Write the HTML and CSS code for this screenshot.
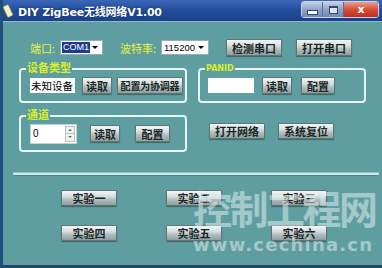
FILE: index.html
```html
<!DOCTYPE html>
<html>
<head>
<meta charset="utf-8">
<link rel="stylesheet" href="styles.css">
</head>
<body>
<div class="window">
  <div class="titlebar">
    <svg class="appicon" width="10" height="14" viewBox="0 0 10 14"><rect x="2" y="1" width="6" height="12" rx="1" transform="rotate(-25 5 7)" fill="#f4f0c8" stroke="#8a7a40" stroke-width="0.8"/></svg>
    <span class="title">DIY ZigBee无线网络V1.00</span>
    <div class="controls">
      <div class="ctl min"><span class="bar"></span></div>
      <div class="ctl max"><span class="box"></span></div>
      <div class="ctl close">x</div>
    </div>
  </div>
  <div class="content">
    <div class="row1">
      <span class="lbl l1">端口:</span>
      <div class="combo c1"><span class="sel">COM1</span><span class="arrow"></span></div>
      <span class="lbl l2">波特率:</span>
      <div class="combo c2"><span class="val">115200</span><span class="arrow"></span></div>
      <button class="btn b56 m17">检测串口</button>
      <button class="btn b56 m14">打开串口</button>
    </div>
    <div class="row2">
      <div class="group">
        <span class="legend">设备类型</span>
        <div class="ginner g1">
          <div class="tbox t1">未知设备</div>
          <button class="btn b30 ml7">读取</button>
          <button class="btn b66 ml5 narrow">配置为协调器</button>
        </div>
      </div>
      <div class="group">
        <span class="legend small">PANID</span>
        <div class="ginner g2">
          <div class="tbox t2"></div>
          <button class="btn b30 ml8">读取</button>
          <button class="btn b34 ml9">配置</button>
        </div>
      </div>
    </div>
    <div class="row3">
      <div class="group tall">
        <span class="legend">通道</span>
        <div class="ginner g3">
          <div class="spin"><span class="sv">0</span><span class="spbtns"><span class="up"></span><span class="dn"></span></span></div>
          <button class="btn b30 ml13">读取</button>
          <button class="btn b35 ml15">配置</button>
        </div>
      </div>
      <div class="rbtns">
        <button class="btn b56">打开网络</button>
        <button class="btn b56 ml13">系统复位</button>
      </div>
    </div>
    <div class="sep"></div>
    <div class="grid">
      <button class="btn">实验一</button>
      <button class="btn">实验二</button>
      <button class="btn">实验三</button>
      <button class="btn">实验四</button>
      <button class="btn">实验五</button>
      <button class="btn">实验六</button>
    </div>
  </div>
  <div class="wm">
    <div class="wm1">控制工程网</div>
    <div class="wm2">www.cechina.cn</div>
  </div>
</div>
</body>
</html>
```
FILE: styles.css
```css
html, body { margin: 0; padding: 0; }
body { width: 382px; height: 268px; overflow: hidden; font-family: "Noto Sans CJK SC", "Liberation Sans", sans-serif; font-size: 12px; }
.window { width: 382px; height: 268px; background: #5f9ea0; border-left: 3px solid #1e4f78; border-bottom: 3px solid #1e4a6e; box-sizing: border-box; position: relative; overflow: hidden; }
.titlebar { height: 21px; margin-left: -3px; background: linear-gradient(to bottom, #3c67b8 0%, #234f9e 45%, #1b418a 100%); border-bottom: 1px solid #8fb8c8; display: flex; align-items: center; position: relative; }
.appicon { margin-left: 3px; margin-right: 5px; }
.title { color: #fff; font-family: "DejaVu Sans", "Noto Sans CJK SC", sans-serif; font-weight: bold; font-size: 11px; letter-spacing: -0.2px; text-shadow: 0 0 2px #0a2050; white-space: nowrap; }
.controls { margin-left: auto; margin-right: 3px; display: flex; align-self: flex-start; margin-top: 1px; border: 1px solid #c8d4ec; border-radius: 3px; overflow: hidden; height: 15px; }
.ctl { height: 15px; display: flex; align-items: center; justify-content: center; }
.min, .max { width: 20px; background: linear-gradient(to bottom, #c4d0e6, #8fa2c6 50%, #7488b4); border-right: 1px solid #5a6e98; }
.min .bar { width: 9px; height: 3px; background: #fff; border: 1px solid #34486e; margin-top: 5px; }
.max .box { width: 7px; height: 5px; border: 1px solid #34486e; border-top-width: 2px; background: #dce4f2; }
.close { width: 34px; background: linear-gradient(to bottom, #e8a090, #d64c38 50%, #c03020); color: #fff; font-weight: bold; font-size: 11px; font-family: "DejaVu Sans", sans-serif; }
.content { padding-left: 16px; }
.row1 { display: flex; align-items: center; margin-top: 17px; height: 17px; padding-left: 11px; }
.lbl { color: #e4f23c; font-size: 11px; white-space: nowrap; }
.l1 { width: 30px; }
.l2 { width: 41px; margin-left: 17px; }
.combo { height: 15px; background: #fff; border: 1px solid #9ab; box-sizing: border-box; display: flex; align-items: center; position: relative; white-space: nowrap; overflow: hidden; }
.c1 { width: 43px; }
.c2 { width: 48px; }
.sel { background: #1c3e8a; color: #fff; font-family: "Liberation Sans", sans-serif; font-size: 9px; line-height: 11px; margin-left: 1px; padding: 0 1px; }
.val { font-family: "Liberation Sans", sans-serif; font-size: 9.5px; margin-left: 2px; color: #000; }
.arrow { position: absolute; right: 4px; top: 5px; width: 0; height: 0; border-left: 3px solid transparent; border-right: 3px solid transparent; border-top: 3px solid #000; }
.btn { height: 17px; padding: 0; margin: 0; box-sizing: border-box; border: 1px solid #5e7476; border-radius: 1px; background: linear-gradient(to bottom, #f2f6f6 0%, #d4dcdc 40%, #b4c0c0 60%, #8e9e9e 100%); color: #1a2626; font-family: "Noto Sans CJK SC", sans-serif; font-weight: bold; font-size: 11px; line-height: 14px; box-shadow: 0 1px 1px #3e6466; white-space: nowrap; overflow: hidden; }
.btn.narrow { font-size: 10px; letter-spacing: -0.2px; }
.b56 { width: 56px; }
.b30 { width: 30px; }
.b34 { width: 34px; }
.b35 { width: 35px; }
.b66 { width: 66px; }
.m17 { margin-left: 17px; }
.m14 { margin-left: 14px; }
.ml5 { margin-left: 5px; }
.ml7 { margin-left: 7px; }
.ml8 { margin-left: 8px; }
.ml9 { margin-left: 9px; }
.ml13 { margin-left: 13px; }
.ml15 { margin-left: 15px; }
.row2 { display: flex; margin-top: 12px; gap: 11px; }
.group { width: 168px; height: 35px; border: 2px solid #e6f4f4; border-radius: 4px; box-sizing: border-box; position: relative; }
.group.tall { height: 37px; }
.legend { position: absolute; left: 5px; top: -9px; color: #d8f028; font-size: 11px; font-weight: bold; line-height: 13px; background: #5f9ea0; padding: 0 1px; white-space: nowrap; }
.legend.small { font-size: 8px; font-family: "DejaVu Sans", sans-serif; top: -6px; line-height: 9px; }
.ginner { display: flex; align-items: center; height: 100%; }
.g1 { padding-left: 9px; }
.g2 { padding-left: 8px; }
.g3 { padding-left: 9px; }
.tbox { height: 15px; background: #fff; box-sizing: border-box; font-size: 10.5px; line-height: 15px; color: #000; padding-left: 1px; white-space: nowrap; overflow: hidden; }
.t1 { width: 45px; }
.t2 { width: 46px; }
.spin { width: 47px; height: 20px; background: #fff; display: flex; align-items: center; box-sizing: border-box; border: 1px solid #c6d2d2; }
.sv { flex: 1; font-family: "Liberation Sans", sans-serif; font-size: 10px; padding-left: 2px; }
.spbtns { width: 10px; height: 16px; display: flex; flex-direction: column; margin-right: 1px; border: 1px solid #b8c4c4; box-sizing: border-box; }
.spbtns span { flex: 1; position: relative; background: #eef2f2; }
.up { border-bottom: 1px solid #b8c4c4; }
.up::after { content: ""; position: absolute; left: 2px; top: 2px; border-left: 2px solid transparent; border-right: 2px solid transparent; border-bottom: 2px solid #607070; }
.dn::after { content: ""; position: absolute; left: 2px; top: 2px; border-left: 2px solid transparent; border-right: 2px solid transparent; border-top: 2px solid #607070; }
.row3 { display: flex; margin-top: 12px; align-items: flex-start; }
.rbtns { display: flex; margin-left: 22px; margin-top: 8px; }
.rbtns .btn { height: 16px; }
.sep { height: 2px; margin: 20px 3px 0 -6px; background: #cfe8ea; border-top: 1px solid #8cc4c8; border-radius: 1px; box-shadow: 0 1px 0 #4a8486; }
.grid { display: grid; grid-template-columns: 56px 56px 56px; column-gap: 49px; row-gap: 19px; margin-top: 15px; padding-left: 42px; }
.grid .btn { width: 56px; height: 16px; }
.wm { position: absolute; left: 190px; top: 182px; color: rgba(232, 244, 244, 0.5); pointer-events: none; white-space: nowrap; }
.wm1 { font-family: "Noto Sans CJK SC", sans-serif; font-weight: bold; font-size: 39px; line-height: 50px; letter-spacing: -2.5px; }
.wm2 { font-family: "DejaVu Sans", sans-serif; font-weight: bold; font-size: 18px; line-height: 20px; letter-spacing: 1.2px; margin-top: 3px; }
```
